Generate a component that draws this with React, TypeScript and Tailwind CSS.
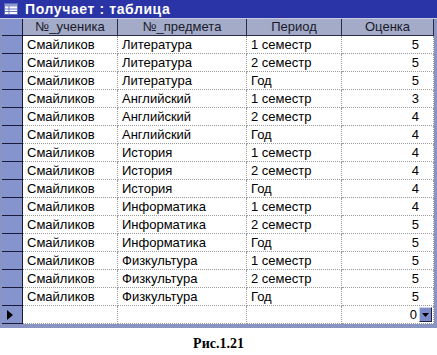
import React from "react";

const rows: [string, string, string, number][] = [
  ["Смайликов", "Литература", "1 семестр", 5],
  ["Смайликов", "Литература", "2 семестр", 5],
  ["Смайликов", "Литература", "Год", 5],
  ["Смайликов", "Английский", "1 семестр", 3],
  ["Смайликов", "Английский", "2 семестр", 4],
  ["Смайликов", "Английский", "Год", 4],
  ["Смайликов", "История", "1 семестр", 4],
  ["Смайликов", "История", "2 семестр", 4],
  ["Смайликов", "История", "Год", 4],
  ["Смайликов", "Информатика", "1 семестр", 4],
  ["Смайликов", "Информатика", "2 семестр", 5],
  ["Смайликов", "Информатика", "Год", 5],
  ["Смайликов", "Физкультура", "1 семестр", 5],
  ["Смайликов", "Физкультура", "2 семестр", 5],
  ["Смайликов", "Физкультура", "Год", 5],
];

const cell = "h-[18px] flex items-center border-r border-b border-dotted border-[#9a9a9a] text-[13px] text-black leading-none";
const selector = "w-[21px] h-[18px] bg-[#8594cc] border-r border-b border-[#1a1a3a]";

const Header = ({ w, children }: { w: string; children: React.ReactNode }) => (
  <div className={`${w} h-full flex items-center justify-center bg-[#a3abc9] border-r border-b border-[#2a2a4a] text-[13px] text-[#1a1a2a]`}>
    {children}
  </div>
);

export default function App() {
  return (
    <div className="w-[437px] h-[355px] bg-white flex flex-col" style={{ fontFamily: '"Liberation Sans", Arial, sans-serif' }}>
      <div className="h-[18px] bg-[#2a34a6] flex items-center gap-[7px] pl-[4px]">
        <svg width="14" height="12" viewBox="0 0 14 12">
          <rect x="0.5" y="0.5" width="13" height="11" fill="#ffffff" stroke="#5a6ab8" />
          <rect x="1" y="1" width="12" height="2.5" fill="#8c9ad0" />
          <line x1="1" y1="6" x2="13" y2="6" stroke="#6a7ac0" />
          <line x1="1" y1="8.5" x2="13" y2="8.5" stroke="#6a7ac0" />
          <line x1="5" y1="3" x2="5" y2="11" stroke="#6a7ac0" />
        </svg>
        <span className="text-white font-bold text-[14px] tracking-[0.6px] leading-none">Получает : таблица</span>
      </div>
      <div className="h-[1px] bg-[#c8cce0]" />
      <div className="flex bg-[#8a94c2] pl-[2px] pr-[3px]">
        <div className="flex flex-col">
          <div className="flex h-[17px]">
            <div className="w-[21px] h-full bg-[#8594cc] border-r border-b border-[#1a1a3a]" />
            <Header w="w-[95px]">№_ученика</Header>
            <Header w="w-[129px]">№_предмета</Header>
            <Header w="w-[95px]">Период</Header>
            <Header w="w-[92px]">Оценка</Header>
          </div>
          {rows.map((r, i) => (
            <div key={i} className="flex">
              <div className={selector} />
              <div className={`${cell} w-[95px] bg-white pl-[4px]`}>{r[0]}</div>
              <div className={`${cell} w-[129px] bg-white pl-[4px]`}>{r[1]}</div>
              <div className={`${cell} w-[95px] bg-white pl-[4px]`}>{r[2]}</div>
              <div className={`${cell} w-[92px] bg-white justify-end pr-[14px]`}>{r[3]}</div>
            </div>
          ))}
          <div className="flex">
            <div className={`${selector} flex items-center pl-[5px]`}>
              <svg width="6" height="10" viewBox="0 0 6 10">
                <polygon points="0,0 6,5 0,10" fill="#000" />
              </svg>
            </div>
            <div className={`${cell} w-[95px] bg-white`} />
            <div className={`${cell} w-[129px] bg-white`} />
            <div className={`${cell} w-[95px] bg-white`} />
            <div className={`${cell} w-[92px] bg-white justify-end pr-[1px] gap-[2px]`}>
              <span className="text-[13px]">0</span>
              <div className="w-[13px] h-[15px] bg-[#7c8cc8] border border-t-[#d0d4ec] border-l-[#d0d4ec] border-r-[#20203a] border-b-[#20203a] flex items-center justify-center">
                <svg width="7" height="4" viewBox="0 0 7 4">
                  <polygon points="0,0 7,0 3.5,4" fill="#000" />
                </svg>
              </div>
            </div>
          </div>
          <div className="h-[4px]" />
        </div>
      </div>
      <div className="flex-1 flex items-center justify-center pt-[4px]">
        <span className="font-bold text-[14px] text-black" style={{ fontFamily: '"Liberation Serif", "Times New Roman", serif' }}>
          Рис.1.21
        </span>
      </div>
    </div>
  );
}
